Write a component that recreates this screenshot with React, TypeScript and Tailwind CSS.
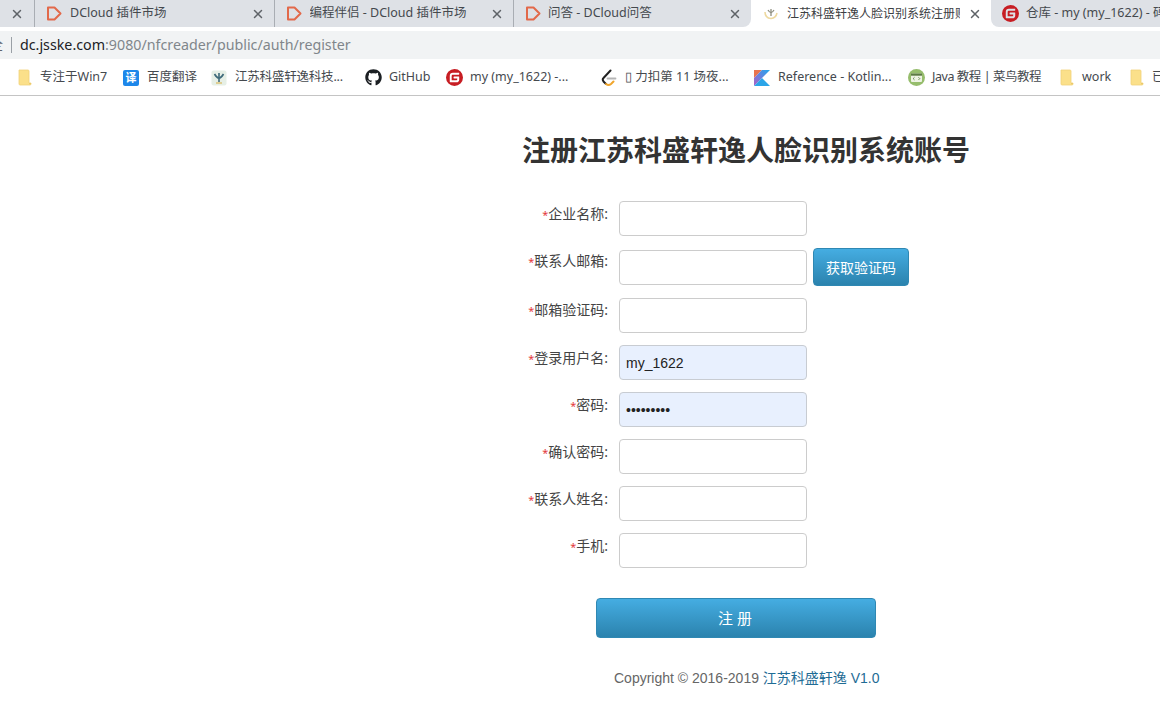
import { X } from 'lucide-react'
import { FaGithub } from 'react-icons/fa'
import { SiGitee } from 'react-icons/si'

const cjk = "font-['Noto_Sans','Noto_Sans_CJK_SC',sans-serif]"

function DCloudIcon() {
  return (
    <svg width="17" height="17" viewBox="0 0 17 17" className="shrink-0">
      <path d="M2 2.5 H8.5 L14.5 8.5 L8.5 14.5 H2 Z" fill="none" stroke="#e2694a" strokeWidth="2" strokeLinejoin="round" />
    </svg>
  )
}

function GiteeIcon() {
  return <SiGitee size={17} className="shrink-0 text-[#c71d23]" />
}

function FolderIcon() {
  return (
    <svg width="14" height="17" viewBox="0 0 14 17" className="shrink-0">
      <path d="M1 1 H10 Q11 1 11 2 V14 H13 V15 Q13 16 12 16 H2 Q1 16 1 15 Z" fill="#fbe08a" stroke="#f1d278" strokeWidth="0.8" />
      <path d="M11 14 H13 L12 16 Z" fill="#e8c566" />
    </svg>
  )
}

function KeshengIcon() {
  return (
    <svg width="16" height="16" viewBox="0 0 16 16" className="shrink-0">
      <rect x="0.5" y="0.5" width="15" height="15" rx="2" fill="#e6efe6" />
      <path d="M3.5 4 Q8 12 12.5 4" fill="none" stroke="#3e6a7a" strokeWidth="1.6" />
      <path d="M8 3 V12" stroke="#3e6a7a" strokeWidth="1.6" />
      <path d="M5 13 H11" stroke="#d9b85c" strokeWidth="1.2" />
    </svg>
  )
}

function KeshengTabIcon() {
  return (
    <svg width="14" height="14" viewBox="0 0 14 14" className="shrink-0">
      <path d="M1 5 Q1 11 7 11.5 Q12 11 13 6" fill="none" stroke="#eed9a0" strokeWidth="1.6" />
      <path d="M4 3 Q7 8 10 3" fill="none" stroke="#8f8f80" strokeWidth="1.3" />
      <path d="M7 2 V9" stroke="#8f8f80" strokeWidth="1.3" />
    </svg>
  )
}

function LeetcodeIcon() {
  return (
    <svg width="16" height="18" viewBox="0 0 16 18" className="shrink-0">
      <path d="M9.5 1.5 L2.5 9 Q1 10.5 2.5 12.5 L5 15" fill="none" stroke="#222" strokeWidth="2" strokeLinecap="round" />
      <path d="M5 15 Q7.5 17 10 15 L12.5 12.5" fill="none" stroke="#f0a52c" strokeWidth="2" strokeLinecap="round" />
      <path d="M6.5 9.5 H14.5" stroke="#b5b5b5" strokeWidth="1.8" strokeLinecap="round" />
    </svg>
  )
}

function KotlinIcon() {
  return (
    <svg width="16" height="16" viewBox="0 0 16 16" className="shrink-0">
      <defs>
        <linearGradient id="kotlinBand" x1="0" y1="1" x2="1" y2="0">
          <stop offset="0" stopColor="#b05fc4" />
          <stop offset="0.55" stopColor="#5f86e0" />
          <stop offset="1" stopColor="#1fa8ec" />
        </linearGradient>
      </defs>
      <path d="M0 0 H8 L0 8 Z" fill="#e8744f" />
      <path d="M8 0 H16 L8 8 L0 16 V8 Z" fill="url(#kotlinBand)" />
      <path d="M8 8 L16 16 H0 Z" fill="#2ba5e8" />
    </svg>
  )
}

function RunoobIcon() {
  return (
    <svg width="17" height="17" viewBox="0 0 17 17" className="shrink-0">
      <circle cx="8.5" cy="8.5" r="8.5" fill="#96bd6c" />
      <rect x="3" y="4.5" width="11" height="8.5" rx="1" fill="#eef3e4" />
      <rect x="3" y="4.5" width="11" height="2.2" fill="#5d7a45" />
      <path d="M6.5 8.3 L5.2 9.6 L6.5 10.9 M10.5 8.3 L11.8 9.6 L10.5 10.9" fill="none" stroke="#5d7a45" strokeWidth="0.9" />
    </svg>
  )
}

function TranslateIcon() {
  return (
    <div className="flex h-4 w-4 shrink-0 items-center justify-center rounded-[2px] bg-[#1d87ea] text-[11px] leading-none font-bold text-white">
      译
    </div>
  )
}

function CloseIcon() {
  return <X size={14} strokeWidth={2.5} className="ml-2 shrink-0 text-[#5f6368]" />
}

function Tab({ title }: { title: string }) {
  return (
    <div className="flex h-[27px] w-[239.5px] shrink-0 items-center border-r border-[#a9adb3] bg-[#dee1e6] pl-[11px] pr-[9px]">
      <DCloudIcon />
      <span className="ml-[7px] flex-1 overflow-hidden text-[12.5px] whitespace-nowrap text-[#45494e]">{title}</span>
      <CloseIcon />
    </div>
  )
}

function Bookmark({ icon, label, className, labelClass = 'ml-2' }: { icon: React.ReactNode; label: string; className: string; labelClass?: string }) {
  return (
    <div className={`flex shrink-0 items-center ${className}`}>
      {icon}
      <span className={`text-[12.5px] whitespace-nowrap text-[#45494e] ${labelClass}`}>{label}</span>
    </div>
  )
}

function Field({
  label,
  value,
  type = 'text',
  className,
  labelOffset = 'mb-[9px]',
  children,
}: {
  label: string
  value?: string
  type?: string
  className: string
  labelOffset?: string
  children?: React.ReactNode
}) {
  return (
    <div className={`flex items-center ${className}`}>
      <label className={`w-[86px] shrink-0 text-right text-[14px] leading-[20px] whitespace-nowrap text-[#444] ${labelOffset}`}>
        <span className="text-[11px] text-[#e4393c]">*</span>
        {label}:
      </label>
      <input
        type={type}
        readOnly
        value={value ?? ''}
        className={
          value
            ? "ml-[11px] h-[35px] w-[188px] rounded-[4px] border border-[#c8ccd2] bg-[#e8f0fe] px-[6px] font-['Liberation_Sans',sans-serif] text-[14px] text-[#222] outline-none"
            : "ml-[11px] h-[35px] w-[188px] rounded-[4px] border border-[#ccc] bg-white px-[6px] font-['Liberation_Sans',sans-serif] text-[14px] text-[#222] outline-none"
        }
      />
      {children}
    </div>
  )
}

export default function App() {
  return (
    <div className={`h-[714px] w-[1160px] overflow-hidden bg-white ${cjk}`}>
      {/* Tab strip */}
      <div className="flex h-[27px] items-center overflow-hidden bg-white">
        <div className="flex h-[27px] w-[35px] shrink-0 items-center justify-end border-r border-[#a9adb3] bg-[#dee1e6] pr-[10px]">
          <X size={14} strokeWidth={2.5} className="text-[#5f6368]" />
        </div>
        <Tab title="DCloud 插件市场" />
        <Tab title="编程伴侣 - DCloud 插件市场" />
        <div className="flex h-[27px] w-[237px] shrink-0 items-center rounded-br-lg bg-[#dee1e6] pl-[11px] pr-[9px]">
          <DCloudIcon />
          <span className="ml-[6px] flex-1 overflow-hidden text-[12.5px] whitespace-nowrap text-[#45494e]">问答 - DCloud问答</span>
          <CloseIcon />
        </div>
        <div className="flex h-[27px] w-[240px] shrink-0 items-center bg-white pl-[13px] pr-[9px]">
          <KeshengTabIcon />
          <span className="ml-[9px] w-[175px] overflow-hidden text-[12px] whitespace-nowrap text-[#3c4043]">
            江苏科盛轩逸人脸识别系统注册账号
          </span>
          <CloseIcon />
        </div>
        <div className="flex h-[27px] flex-1 items-center rounded-bl-lg bg-[#dee1e6] pl-[11px]">
          <GiteeIcon />
          <span className="ml-[7px] text-[12.5px] whitespace-nowrap text-[#45494e]">仓库 - my (my_1622) - 码云</span>
        </div>
      </div>

      {/* Address bar */}
      <div className="h-[4px] bg-white" />
      <div className="flex h-[28px] items-center overflow-hidden bg-[#f1f3f4]">
        <span className="-ml-[10px] w-[13px] shrink-0 text-[13px] text-[#5f6368]">全</span>
        <div className="ml-[8px] h-[16px] w-px bg-[#9aa0a6]" />
        <span className="ml-[8px] text-[14.25px] whitespace-nowrap text-[#202124]">
          dc.jsske.com<span className="text-[#80868b]">:9080/nfcreader/public/auth/register</span>
        </span>
      </div>

      {/* Bookmarks */}
      <div className="flex h-[37px] items-center overflow-hidden border-b border-[#c4c4c4] bg-white pt-[1px]">
        <Bookmark className="ml-[18px] w-[91px]" icon={<FolderIcon />} label="专注于Win7" />
        <Bookmark className="ml-[14px] w-[75px]" icon={<TranslateIcon />} label="百度翻译" />
        <Bookmark className="ml-[13px] w-[132px]" labelClass="ml-2 tracking-[-0.2px]" icon={<KeshengIcon />} label="江苏科盛轩逸科技..." />
        <Bookmark className="ml-[22px] w-[65px]" labelClass="ml-[7px]" icon={<FaGithub size={17} className="shrink-0 text-[#1b1f23]" />} label="GitHub" />
        <Bookmark className="ml-[16px] w-[125px]" labelClass="ml-[7px]" icon={<GiteeIcon />} label="my (my_1622) -..." />
        <Bookmark className="ml-[30px] w-[126px]" icon={<LeetcodeIcon />} label="▯ 力扣第 11 场夜..." />
        <Bookmark className="ml-[27px] w-[137px]" icon={<KotlinIcon />} label="Reference - Kotlin..." />
        <Bookmark className="ml-[17px] w-[134px]" labelClass="ml-[7px] tracking-[-0.45px]" icon={<RunoobIcon />} label="Java 教程 | 菜鸟教程" />
        <Bookmark className="ml-[18px] w-[52px]" icon={<FolderIcon />} label="work" />
        <Bookmark className="ml-[18px]" icon={<FolderIcon />} label="已" />
      </div>

      {/* Register form */}
      <main className="ml-[522px] w-[448px]">
        <h1 className="mt-[34px] h-[40px] text-[28px] leading-[40px] font-bold whitespace-nowrap text-[#333]">
          注册江苏科盛轩逸人脸识别系统账号
        </h1>
        <Field className="mt-[31px]" label="企业名称" />
        <Field className="mt-[14px]" labelOffset="mb-[13px]" label="联系人邮箱">
          <button className="-mt-[2px] -mb-[1px] ml-[6px] h-[38px] w-[96px] rounded-[4px] border border-[#2f88b3] bg-gradient-to-b from-[#45ade2] to-[#2b83ae] text-[14px] text-white">
            获取验证码
          </button>
        </Field>
        <Field className="mt-[13px]" labelOffset="mb-[11px]" label="邮箱验证码" />
        <Field className="mt-[12px]" label="登录用户名" value="my_1622" />
        <Field className="mt-[12px]" label="密码" type="password" value="123456789" />
        <Field className="mt-[12px]" label="确认密码" type="password" />
        <Field className="mt-[12px]" label="联系人姓名" />
        <Field className="mt-[12px]" label="手机" />
        <button className="mt-[30px] ml-[74px] block h-[40px] w-[280px] rounded-[4px] border border-[#2f88b3] bg-gradient-to-b from-[#45ade2] to-[#2b83ae] pl-[2px] text-[15px] tracking-[4px] text-white">
          注册
        </button>
        <p className="mt-[30px] ml-[92px] font-['Liberation_Sans','Noto_Sans_CJK_SC',sans-serif] text-[14px] leading-[20px] whitespace-nowrap text-[#666]">
          Copyright © 2016-2019 <span className="text-[#1f6c95]">江苏科盛轩逸 V1.0</span>
        </p>
      </main>
    </div>
  )
}
